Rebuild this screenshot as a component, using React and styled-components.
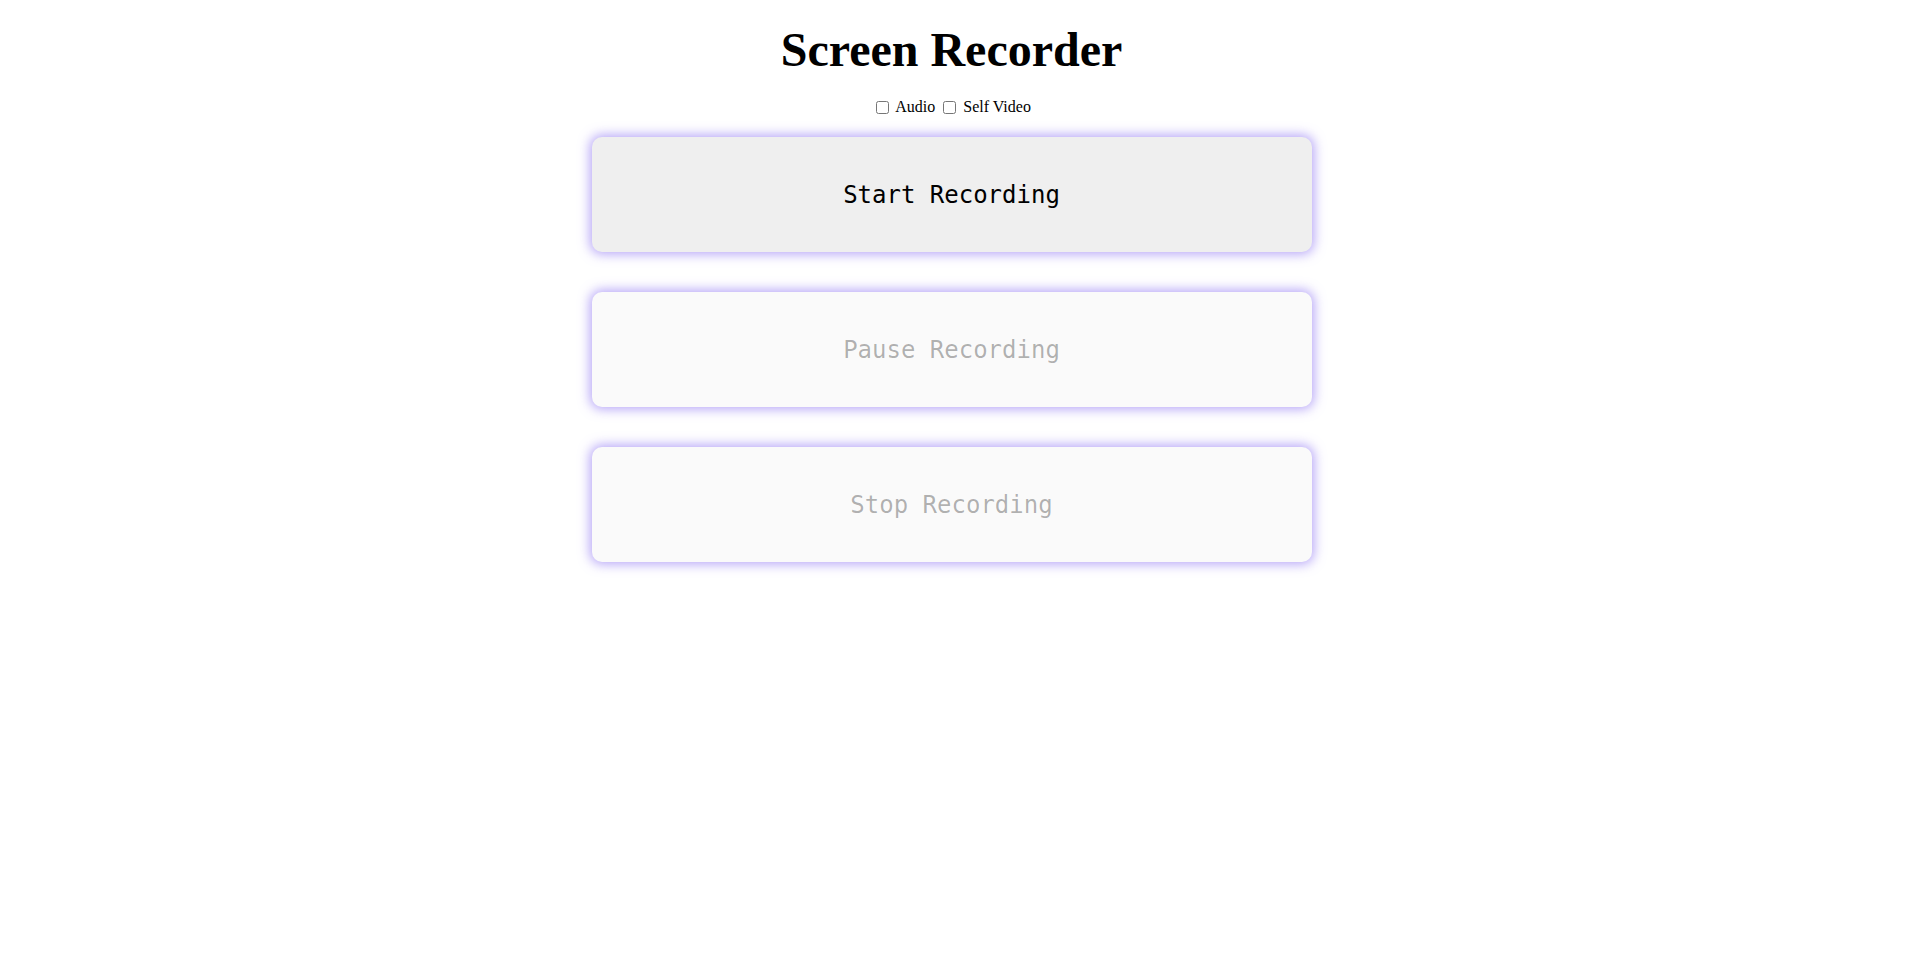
// Import Node Modules
import React, { useState } from 'react';
import styled, { createGlobalStyle } from 'styled-components';

// Global Style
const GlobalStyle = createGlobalStyle`
  html, body {
    margin: 0;
    padding: 0;
    background: #ffffff;
  }
  body {
    font-family: "Liberation Serif", "Times New Roman", serif;
    color: #000000;
  }
`;

// Styled Components
// right padding keeps the same centre as a page with a 17px scrollbar gutter
const Page = styled.div`
  display: flex;
  flex-direction: column;
  align-items: center;
  padding: 22px 17px 0 0;
  min-height: 1576px;
  box-sizing: border-box;
`;

const Title = styled.h1`
  margin: 0;
  font-size: 48px;
  font-weight: bold;
  line-height: normal;
`;

const Options = styled.div`
  margin-top: 21px;
  font-size: 16px;
  line-height: normal;
`;

const Check = styled.input`
  margin: 3px 3px 3px 4px;
  width: 13px;
  height: 13px;
  vertical-align: -2px;
`;

const Controls = styled.div`
  display: flex;
  flex-direction: column;
  gap: 40px;
  margin-top: 20px;
  width: 720px;
`;

const RecordButton = styled.button`
  height: 115px;
  width: 100%;
  border: none;
  border-radius: 10px;
  background: #efefef;
  color: #000000;
  font-family: "DejaVu Sans Mono", "Liberation Mono", monospace;
  font-size: 24px;
  box-shadow: 0 0 12px 2px rgba(118, 88, 240, 0.55);
  cursor: pointer;

  &:disabled {
    background: #fafafa;
    color: rgba(16, 16, 16, 0.32);
    cursor: default;
  }
`;

// Component
const App = () => {
  const [audio, setAudio] = useState(false);
  const [selfVideo, setSelfVideo] = useState(false);
  const [recording, setRecording] = useState(false);

  return (
    <Page>
      <GlobalStyle />
      <Title>Screen Recorder</Title>
      <Options>
        <label>
          <Check
            type="checkbox"
            checked={audio}
            onChange={() => setAudio(!audio)}
          />
          {' '}
          Audio
        </label>
        {' '}
        <label>
          <Check
            type="checkbox"
            checked={selfVideo}
            onChange={() => setSelfVideo(!selfVideo)}
          />
          {' '}
          Self Video
        </label>
      </Options>
      <Controls>
        <RecordButton disabled={recording} onClick={() => setRecording(true)}>
          Start Recording
        </RecordButton>
        <RecordButton disabled={!recording}>Pause Recording</RecordButton>
        <RecordButton disabled={!recording} onClick={() => setRecording(false)}>
          Stop Recording
        </RecordButton>
      </Controls>
    </Page>
  );
};

export default App;
